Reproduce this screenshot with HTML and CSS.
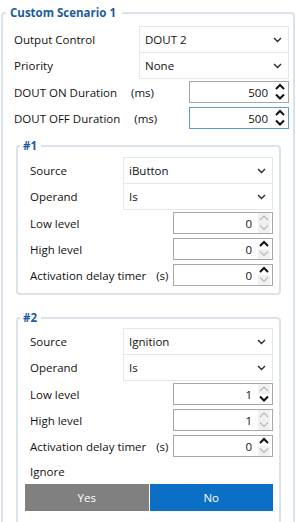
FILE: index.html
```html
<!doctype html>
<html lang="en">
<head>
	<meta charset="UTF-8">
	<title>Custom Scenario 1</title>
<link rel="stylesheet" href="styles.css">
</head>
<body>
	<fieldset class="group">
		<legend>Custom Scenario 1</legend>
		<div class="row sel">
			<span class="label">Output Control</span>
			<div class="select">DOUT 2<svg class="chev" width="9" height="6" viewBox="0 0 9 6"><path d="M1 1 L4.5 4.5 L8 1"/></svg></div>
		</div>
		<div class="row sel">
			<span class="label">Priority</span>
			<div class="select">None<svg class="chev" width="9" height="6" viewBox="0 0 9 6"><path d="M1 1 L4.5 4.5 L8 1"/></svg></div>
		</div>
		<div class="row">
			<span class="label">DOUT ON Duration<span class="unit">(ms)</span></span>
			<div class="spin">
				<span class="val">500</span>
				<span class="arrows">
					<i class="up"><svg width="12" height="10" viewBox="0 0 12 10"><path d="M2 7 L6 3 L10 7"/></svg></i>
					<i class="down"><svg width="12" height="10" viewBox="0 0 12 10"><path d="M2 2.5 L6 6.5 L10 2.5"/></svg></i>
				</span>
			</div>
		</div>
		<div class="row">
			<span class="label">DOUT OFF Duration<span class="unit">(ms)</span></span>
			<div class="spin focus">
				<span class="val">500</span>
				<span class="arrows">
					<i class="up"><svg width="12" height="10" viewBox="0 0 12 10"><path d="M2 7 L6 3 L10 7"/></svg></i>
					<i class="down"><svg width="12" height="10" viewBox="0 0 12 10"><path d="M2 2.5 L6 6.5 L10 2.5"/></svg></i>
				</span>
			</div>
		</div>

		<fieldset class="box first">
			<legend>#1</legend>
			<div class="row sel">
				<span class="label">Source</span>
				<div class="select">iButton<svg class="chev" width="9" height="6" viewBox="0 0 9 6"><path d="M1 1 L4.5 4.5 L8 1"/></svg></div>
			</div>
			<div class="row sel">
				<span class="label">Operand</span>
				<div class="select">Is<svg class="chev" width="9" height="6" viewBox="0 0 9 6"><path d="M1 1 L4.5 4.5 L8 1"/></svg></div>
			</div>
			<div class="row">
				<span class="label">Low level</span>
				<div class="spin">
					<span class="val">0</span>
					<span class="arrows">
						<i class="up off"><svg width="12" height="10" viewBox="0 0 12 10"><path d="M2 7 L6 3 L10 7"/></svg></i>
						<i class="down off"><svg width="12" height="10" viewBox="0 0 12 10"><path d="M2 2.5 L6 6.5 L10 2.5"/></svg></i>
					</span>
				</div>
			</div>
			<div class="row">
				<span class="label">High level</span>
				<div class="spin">
					<span class="val">0</span>
					<span class="arrows">
						<i class="up"><svg width="12" height="10" viewBox="0 0 12 10"><path d="M2 7 L6 3 L10 7"/></svg></i>
						<i class="down off"><svg width="12" height="10" viewBox="0 0 12 10"><path d="M2 2.5 L6 6.5 L10 2.5"/></svg></i>
					</span>
				</div>
			</div>
			<div class="row">
				<span class="label">Activation delay timer<span class="unit">(s)</span></span>
				<div class="spin">
					<span class="val">0</span>
					<span class="arrows">
						<i class="up"><svg width="12" height="10" viewBox="0 0 12 10"><path d="M2 7 L6 3 L10 7"/></svg></i>
						<i class="down off"><svg width="12" height="10" viewBox="0 0 12 10"><path d="M2 2.5 L6 6.5 L10 2.5"/></svg></i>
					</span>
				</div>
			</div>
		</fieldset>

		<fieldset class="box second">
			<legend>#2</legend>
			<div class="row sel">
				<span class="label">Source</span>
				<div class="select">Ignition<svg class="chev" width="9" height="6" viewBox="0 0 9 6"><path d="M1 1 L4.5 4.5 L8 1"/></svg></div>
			</div>
			<div class="row sel">
				<span class="label">Operand</span>
				<div class="select">Is<svg class="chev" width="9" height="6" viewBox="0 0 9 6"><path d="M1 1 L4.5 4.5 L8 1"/></svg></div>
			</div>
			<div class="row">
				<span class="label">Low level</span>
				<div class="spin">
					<span class="val">1</span>
					<span class="arrows">
						<i class="up off"><svg width="12" height="10" viewBox="0 0 12 10"><path d="M2 7 L6 3 L10 7"/></svg></i>
						<i class="down"><svg width="12" height="10" viewBox="0 0 12 10"><path d="M2 2.5 L6 6.5 L10 2.5"/></svg></i>
					</span>
				</div>
			</div>
			<div class="row">
				<span class="label">High level</span>
				<div class="spin">
					<span class="val">1</span>
					<span class="arrows">
						<i class="up off"><svg width="12" height="10" viewBox="0 0 12 10"><path d="M2 7 L6 3 L10 7"/></svg></i>
						<i class="down off"><svg width="12" height="10" viewBox="0 0 12 10"><path d="M2 2.5 L6 6.5 L10 2.5"/></svg></i>
					</span>
				</div>
			</div>
			<div class="row">
				<span class="label">Activation delay timer<span class="unit">(s)</span></span>
				<div class="spin">
					<span class="val">0</span>
					<span class="arrows">
						<i class="up"><svg width="12" height="10" viewBox="0 0 12 10"><path d="M2 7 L6 3 L10 7"/></svg></i>
						<i class="down off"><svg width="12" height="10" viewBox="0 0 12 10"><path d="M2 2.5 L6 6.5 L10 2.5"/></svg></i>
					</span>
				</div>
			</div>
			<div class="row ignore">
				<span class="label">Ignore</span>
			</div>
			<div class="toggle">
				<a href="javascript:;" class="yes">Yes</a>
				<a href="javascript:;" class="no">No</a>
			</div>
		</fieldset>
	</fieldset>
</body>
</html>
```

FILE: styles.css
```css
body{
	margin: 0;
	font-family: "Open Sans", "Liberation Sans", sans-serif;
	font-size: 11.5px;
	color: #111;
	background: #fff;
}
fieldset{
	min-width: 0;
	border: 2px solid #dce2e9;
}
.group{
	margin: 5px 1px 0 1px;
	padding: 5px 4px 0 11px;
	border-bottom: none;
	border-radius: 4px 4px 0 0;
}
legend{
	margin-left: -8px;
	padding: 0 6px 0 4px;
	line-height: 16px;
	font-weight: bold;
	color: #1b5b9e;
}
.box{
	margin: 8px 8px 0 2px;
	padding: 4px 6px 5px 7px;
	border-radius: 4px;
}
.box legend{
	margin-left: -5px;
	padding: 0 4px 0 3px;
	line-height: 14px;
}
.second{
	margin-top: 16px;
	padding-top: 3px;
	padding-bottom: 20px;
}
.row{
	display: flex;
	align-items: center;
	height: 26px;
}
.row.sel{
	height: 27px;
}
.row.sel + .row.sel{
	margin-top: -1px;
}
.row.ignore{
	height: 25px;
}
.label{
	flex: 1;
	white-space: nowrap;
}
.box .label{
	padding-left: 5px;
}
.unit{
	margin-left: 14px;
}
.box .unit{
	margin-left: 10px;
}
.select{
	width: 150px;
	height: 27px;
	box-sizing: border-box;
	border: 1px solid #e2e7ed;
	display: flex;
	align-items: center;
	justify-content: space-between;
	padding: 0 6px 0 5px;
}
.chev path{
	fill: none;
	stroke: #2a2a2a;
	stroke-width: 1.4;
}
.spin{
	width: 100px;
	height: 22px;
	box-sizing: border-box;
	border: 1px solid #a8a8a8;
	display: flex;
	align-items: center;
	justify-content: flex-end;
}
.spin.focus{
	border-color: #5b9bd8;
}
.arrows{
	display: flex;
	flex-direction: column;
	margin: 0 2px 0 6px;
}
.arrows i{
	display: block;
	width: 12px;
	height: 10px;
}
.arrows svg{
	display: block;
}
.arrows path{
	fill: none;
	stroke: #111;
	stroke-width: 2;
}
.arrows .off{
	background-color: #f0f0f0;
}
.arrows .off path{
	stroke: #b9b9b9;
	stroke-width: 1.2;
}
.toggle{
	display: grid;
	grid-template-columns: 1fr 1fr;
	gap: 1px;
	height: 27px;
}
.toggle a{
	display: flex;
	align-items: center;
	justify-content: center;
	color: #fff;
	text-decoration: none;
}
.yes{
	background-color: #808080;
}
.no{
	background-color: #0b6fc6;
}
```
